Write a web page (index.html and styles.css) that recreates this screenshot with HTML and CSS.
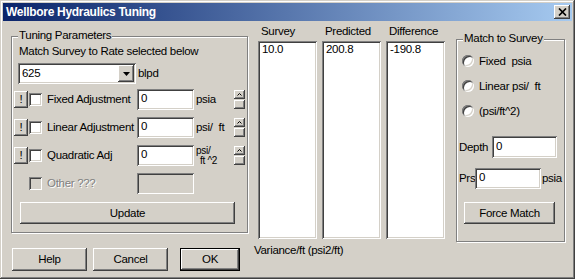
FILE: index.html
```html
<!DOCTYPE html>
<html lang="en">
<head>
    <meta charset="UTF-8">
    <meta name="viewport" content="width=device-width, initial-scale=1.0">
    <title>Wellbore Hydraulics Tuning</title>
    <link rel="stylesheet" href="styles.css">
</head>
<body>
    <div class="window">
        <div class="titlebar">
            <span class="title">Wellbore Hydraulics Tuning</span>
            <button class="close-btn raised" aria-label="Close">
                <svg width="9" height="8" viewBox="0 0 9 8"><path d="M1 0.5 L8 7.5 M8 0.5 L1 7.5" stroke="#000" stroke-width="1.7" fill="none"/></svg>
            </button>
        </div>

        <div class="dialog">
            <div class="left">
                <div class="group tuning">
                    <span class="group-title">Tuning Parameters</span>
                    <div class="hint">Match Survey to Rate selected below</div>
                    <div class="rate-row">
                        <div class="combo sunken">
                            <span class="combo-value">625</span>
                            <span class="combo-btn raised">
                                <svg width="7" height="4" viewBox="0 0 7 4"><polygon points="0,0 7,0 3.5,4" fill="#000"/></svg>
                            </span>
                        </div>
                        <span class="rate-unit">blpd</span>
                    </div>

                    <div class="adj-rows">
                        <div class="adj-row">
                            <button class="bang raised">!</button>
                            <input type="checkbox" class="check">
                            <span class="adj-label">Fixed Adjustment</span>
                            <input type="text" class="field sunken" value="0">
                            <span class="adj-unit">psia</span>
                            <div class="spin">
                                <span class="spin-btn raised"><svg width="5" height="3" viewBox="0 0 5 3"><path d="M0.5 2.5 L2.5 0.5 L4.5 2.5" stroke="#000" fill="none"/></svg></span>
                                <span class="spin-btn raised"></span>
                            </div>
                        </div>
                        <div class="adj-row">
                            <button class="bang raised">!</button>
                            <input type="checkbox" class="check">
                            <span class="adj-label">Linear Adjustment</span>
                            <input type="text" class="field sunken" value="0">
                            <span class="adj-unit">psi/  ft</span>
                            <div class="spin">
                                <span class="spin-btn raised"><svg width="5" height="3" viewBox="0 0 5 3"><path d="M0.5 2.5 L2.5 0.5 L4.5 2.5" stroke="#000" fill="none"/></svg></span>
                                <span class="spin-btn raised"></span>
                            </div>
                        </div>
                        <div class="adj-row">
                            <button class="bang raised">!</button>
                            <input type="checkbox" class="check">
                            <span class="adj-label">Quadratic Adj</span>
                            <input type="text" class="field sunken" value="0">
                            <span class="adj-unit two-line"><span>psi/</span><span class="indent">ft ^2</span></span>
                            <div class="spin">
                                <span class="spin-btn raised"><svg width="5" height="3" viewBox="0 0 5 3"><path d="M0.5 2.5 L2.5 0.5 L4.5 2.5" stroke="#000" fill="none"/></svg></span>
                                <span class="spin-btn raised"></span>
                            </div>
                        </div>
                        <div class="adj-row">
                            <span class="bang-space"></span>
                            <input type="checkbox" class="check" disabled>
                            <span class="adj-label disabled">Other ???</span>
                            <input type="text" class="field sunken" disabled>
                        </div>
                    </div>

                    <button class="btn raised update-btn">Update</button>
                </div>

                <div class="button-row">
                    <button class="btn raised help-btn">Help</button>
                    <button class="btn raised cancel-btn">Cancel</button>
                    <button class="btn raised ok-btn">OK</button>
                </div>
            </div>

            <div class="middle">
                <div class="lists">
                    <div class="list-col">
                        <div class="list-head">Survey</div>
                        <div class="listbox sunken">10.0</div>
                    </div>
                    <div class="list-col">
                        <div class="list-head">Predicted</div>
                        <div class="listbox sunken">200.8</div>
                    </div>
                    <div class="list-col">
                        <div class="list-head">Difference</div>
                        <div class="listbox sunken">-190.8</div>
                    </div>
                </div>
                <div class="variance">Variance/ft (psi2/ft)</div>
            </div>

            <div class="group match">
                <span class="group-title">Match to Survey</span>
                <div class="radio-list">
                    <label class="radio-row"><input type="radio" name="match" class="radio"><span class="pre">Fixed  psia</span></label>
                    <label class="radio-row"><input type="radio" name="match" class="radio"><span class="pre">Linear psi/  ft</span></label>
                    <label class="radio-row"><input type="radio" name="match" class="radio"><span>(psi/ft^2)</span></label>
                </div>
                <div class="depth-row">
                    <span class="depth-label">Depth</span>
                    <input type="text" class="field sunken depth-field" value="0">
                </div>
                <div class="prs-row">
                    <span class="prs-label">Prs</span>
                    <input type="text" class="field sunken prs-field" value="0">
                    <span class="prs-unit">psia</span>
                </div>
                <button class="btn raised force-btn">Force Match</button>
            </div>
        </div>
    </div>
</body>
</html>
```

FILE: styles.css
```css
:root {
    --face: #d4d0c8;
    --shadow: #808080;
    --dark: #404040;
    --light: #ffffff;
}

* {
    margin: 0;
    padding: 0;
    box-sizing: border-box;
}

body {
    font-family: "Liberation Sans", Arial, sans-serif;
    font-size: 11.5px;
    letter-spacing: -0.3px;
    line-height: 13px;
    color: #000;
    background: var(--face);
}

/* 3d edges */
.raised {
    background: var(--face);
    border: none;
    box-shadow: inset -1px -1px var(--dark), inset 1px 1px var(--light), inset -2px -2px var(--shadow);
}

.sunken {
    background: #fff;
    border: none;
    box-shadow: inset 1px 1px var(--shadow), inset -1px -1px var(--light), inset 2px 2px var(--dark), inset -2px -2px var(--face);
}

.window {
    width: 575px;
    height: 279px;
    padding: 3px;
    display: flex;
    flex-direction: column;
    background: var(--face);
    box-shadow: inset -1px -1px var(--dark), inset 1px 1px var(--face), inset -2px -2px var(--shadow), inset 2px 2px var(--light);
}

.titlebar {
    height: 18px;
    display: flex;
    align-items: center;
    justify-content: space-between;
    padding: 0 2px 0 3px;
    background: linear-gradient(90deg, #0a246a, #a6caf0);
    color: #fff;
    font-weight: bold;
    font-size: 12px;
    letter-spacing: -0.3px;
}

.close-btn {
    width: 16px;
    height: 14px;
    display: flex;
    align-items: center;
    justify-content: center;
}

.dialog {
    flex: 1;
    display: flex;
    align-items: flex-start;
}

button, input {
    font: inherit;
    letter-spacing: inherit;
    color: inherit;
}

/* group boxes */
.group {
    position: relative;
    border: 1px solid var(--shadow);
    box-shadow: inset 1px 1px var(--light), 1px 1px var(--light);
}

.group-title {
    position: absolute;
    top: -8px;
    left: 6px;
    padding: 0 1px;
    background: var(--face);
}

/* left column */
.left {
    width: 237px;
    margin: 15px 0 0 8px;
}

.tuning {
    height: 197px;
    padding: 8px 0 0 2px;
}

.hint {
    margin-left: 5px;
}

.rate-row {
    display: flex;
    align-items: center;
    margin: 5px 0 0 4px;
}

.combo {
    width: 118px;
    height: 21px;
    padding: 2px;
    display: flex;
    align-items: center;
    justify-content: space-between;
}

.combo-value {
    padding-left: 2px;
}

.combo-btn {
    width: 16px;
    height: 17px;
    display: flex;
    align-items: center;
    justify-content: center;
}

.rate-unit {
    margin-left: 2px;
}

.adj-rows {
    display: grid;
    row-gap: 7px;
    margin-top: 5px;
}

.adj-row {
    height: 21px;
    display: flex;
    align-items: center;
}

.bang, .bang-space {
    width: 14px;
    height: 17px;
    flex: none;
    text-align: center;
}

.check {
    appearance: none;
    -webkit-appearance: none;
    width: 13px;
    height: 13px;
    margin-left: 1px;
    flex: none;
    background: #fff;
    box-shadow: inset 1px 1px var(--shadow), inset -1px -1px var(--light), inset 2px 2px var(--dark), inset -2px -2px var(--face);
}

.check:disabled {
    background: var(--face);
}

.adj-label {
    width: 90px;
    margin-left: 5px;
    white-space: nowrap;
}

.disabled {
    color: var(--shadow);
    text-shadow: 1px 1px var(--light);
}

.field {
    width: 57px;
    height: 21px;
    padding: 0 2px 3px 4px;
    outline: none;
}

.field:disabled {
    background: var(--face);
}

.adj-unit {
    width: 38px;
    margin-left: 2px;
    white-space: pre;
}

.two-line {
    display: flex;
    flex-direction: column;
    font-size: 10px;
    line-height: 10px;
    margin-top: 1px;
}

.indent {
    padding-left: 4px;
}

.spin {
    display: flex;
    flex-direction: column;
    gap: 1px;
}

.spin-btn {
    width: 11px;
    height: 9px;
    display: flex;
    align-items: center;
    justify-content: center;
}

.btn {
    height: 22px;
    text-align: center;
}

.update-btn {
    width: 215px;
    margin: 8px 0 0 6px;
}

.button-row {
    display: flex;
    margin: 15px 0 0 1px;
}

.help-btn, .cancel-btn {
    width: 75px;
    height: 23px;
}

.cancel-btn {
    margin-left: 6px;
}

.ok-btn {
    width: 60px;
    height: 23px;
    margin-left: 12px;
    border: 1px solid #000;
}

/* lists */
.middle {
    margin: 4px 0 0 10px;
}

.lists {
    display: flex;
    gap: 5px;
}

.list-col {
    width: 59px;
}

.list-head {
    height: 13px;
    padding-left: 3px;
}

.listbox {
    height: 198px;
    margin-top: 3px;
    padding: 2px 4px;
}

.variance {
    margin: 5px 0 0 -4px;
}

/* match to survey */
.match {
    width: 109px;
    height: 203px;
    margin: 18px 0 0 11px;
    padding: 15px 0 0 5px;
}

.radio-list {
    display: flex;
    flex-direction: column;
    gap: 13px;
}

.radio-row {
    height: 12px;
    display: flex;
    align-items: center;
}

.radio {
    appearance: none;
    -webkit-appearance: none;
    width: 12px;
    height: 12px;
    flex: none;
    border-radius: 50%;
    background: #fff;
    box-shadow: inset 1px 1px var(--shadow), inset -1px -1px var(--light), inset 2px 2px var(--dark), inset -2px -2px var(--face);
}

.radio-row span {
    margin-left: 5px;
}

.pre {
    white-space: pre;
}

.depth-row, .prs-row {
    display: flex;
    align-items: center;
    margin-left: -3px;
}

.depth-row {
    margin-top: 19px;
}

.depth-label {
    width: 33px;
}

.depth-field {
    width: 65px;
    height: 22px;
}

.prs-row {
    margin-top: 10px;
}

.prs-label {
    width: 16px;
}

.prs-field {
    width: 66px;
}

.prs-unit {
    margin-left: 1px;
}

.force-btn {
    width: 91px;
    margin: 13px 0 0 2px;
}
```
